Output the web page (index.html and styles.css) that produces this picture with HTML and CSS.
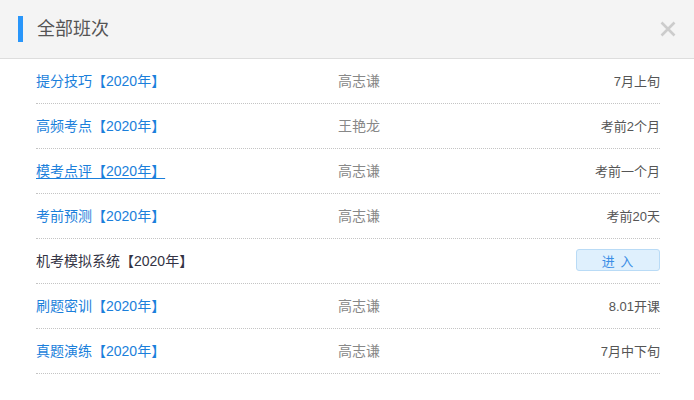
FILE: index.html
```html
<!DOCTYPE html>
<html lang="zh-CN">
<head>
<meta charset="utf-8">
<link rel="stylesheet" href="styles.css">
</head>
<body>
<div class="dialog">
  <div class="header">
    <span class="bar"></span>
    <h2 class="title">全部班次</h2>
    <span class="close">
      <svg width="16" height="16" viewBox="0 0 16 16"><path d="M1.5 1.5 L14.5 14.5 M14.5 1.5 L1.5 14.5" stroke="#cccccc" stroke-width="2.6" stroke-linecap="butt"/></svg>
    </span>
  </div>
  <ul class="list">
    <li class="row"><a class="name">提分技巧【2020年】</a><span class="teacher">高志谦</span><span class="time">7月上旬</span></li>
    <li class="row"><a class="name">高频考点【2020年】</a><span class="teacher">王艳龙</span><span class="time">考前2个月</span></li>
    <li class="row"><a class="name hover">模考点评【2020年】</a><span class="teacher">高志谦</span><span class="time">考前一个月</span></li>
    <li class="row"><a class="name">考前预测【2020年】</a><span class="teacher">高志谦</span><span class="time">考前20天</span></li>
    <li class="row"><a class="name dark">机考模拟系统【2020年】</a><span class="teacher"></span><span class="time"><span class="btn">进 入</span></span></li>
    <li class="row"><a class="name">刷题密训【2020年】</a><span class="teacher">高志谦</span><span class="time">8.01开课</span></li>
    <li class="row"><a class="name">真题演练【2020年】</a><span class="teacher">高志谦</span><span class="time">7月中下旬</span></li>
  </ul>
</div>
</body>
</html>
```
FILE: styles.css
```css
html, body {
  margin: 0;
  padding: 0;
  background: #ffffff;
  font-family: "Liberation Sans", "Noto Sans CJK SC", sans-serif;
}
.dialog {
  width: 694px;
}
.header {
  height: 58px;
  background: #f4f4f4;
  border-bottom: 1px solid #dddddd;
  display: flex;
  align-items: center;
  padding: 0 18px;
  box-sizing: content-box;
}
.bar {
  width: 5px;
  height: 26px;
  background: #2996fa;
  margin-right: 14px;
}
.title {
  margin: 0;
  font-size: 18px;
  font-weight: normal;
  color: #555555;
  flex: 1;
  line-height: 26px;
}
.close {
  display: flex;
  align-items: center;
}
.list {
  list-style: none;
  margin: 0;
  padding: 0 34px 0 36px;
}
.row {
  display: grid;
  grid-template-columns: 302px 1fr auto;
  align-items: center;
  height: 44px;
  padding-bottom: 2px;
  box-sizing: border-box;
  height: 45px;
  border-bottom: 1px dotted #c4c4c4;
  font-size: 14px;
}
.name {
  color: #1b7fdb;
  text-decoration: none;
}
.name.hover {
  text-decoration: underline;
  text-underline-offset: 2px;
}
.name.dark {
  color: #333344;
}
.teacher {
  color: #888888;
}
.time {
  color: #555555;
  font-size: 13px;
  text-align: right;
}
.btn {
  display: inline-flex;
  align-items: center;
  justify-content: center;
  width: 82px;
  height: 20px;
  border: 1px solid #b9dbf6;
  background: #dff0fd;
  border-radius: 3px;
  color: #3a8ee6;
  font-size: 13px;
  letter-spacing: 1px;
}
```
